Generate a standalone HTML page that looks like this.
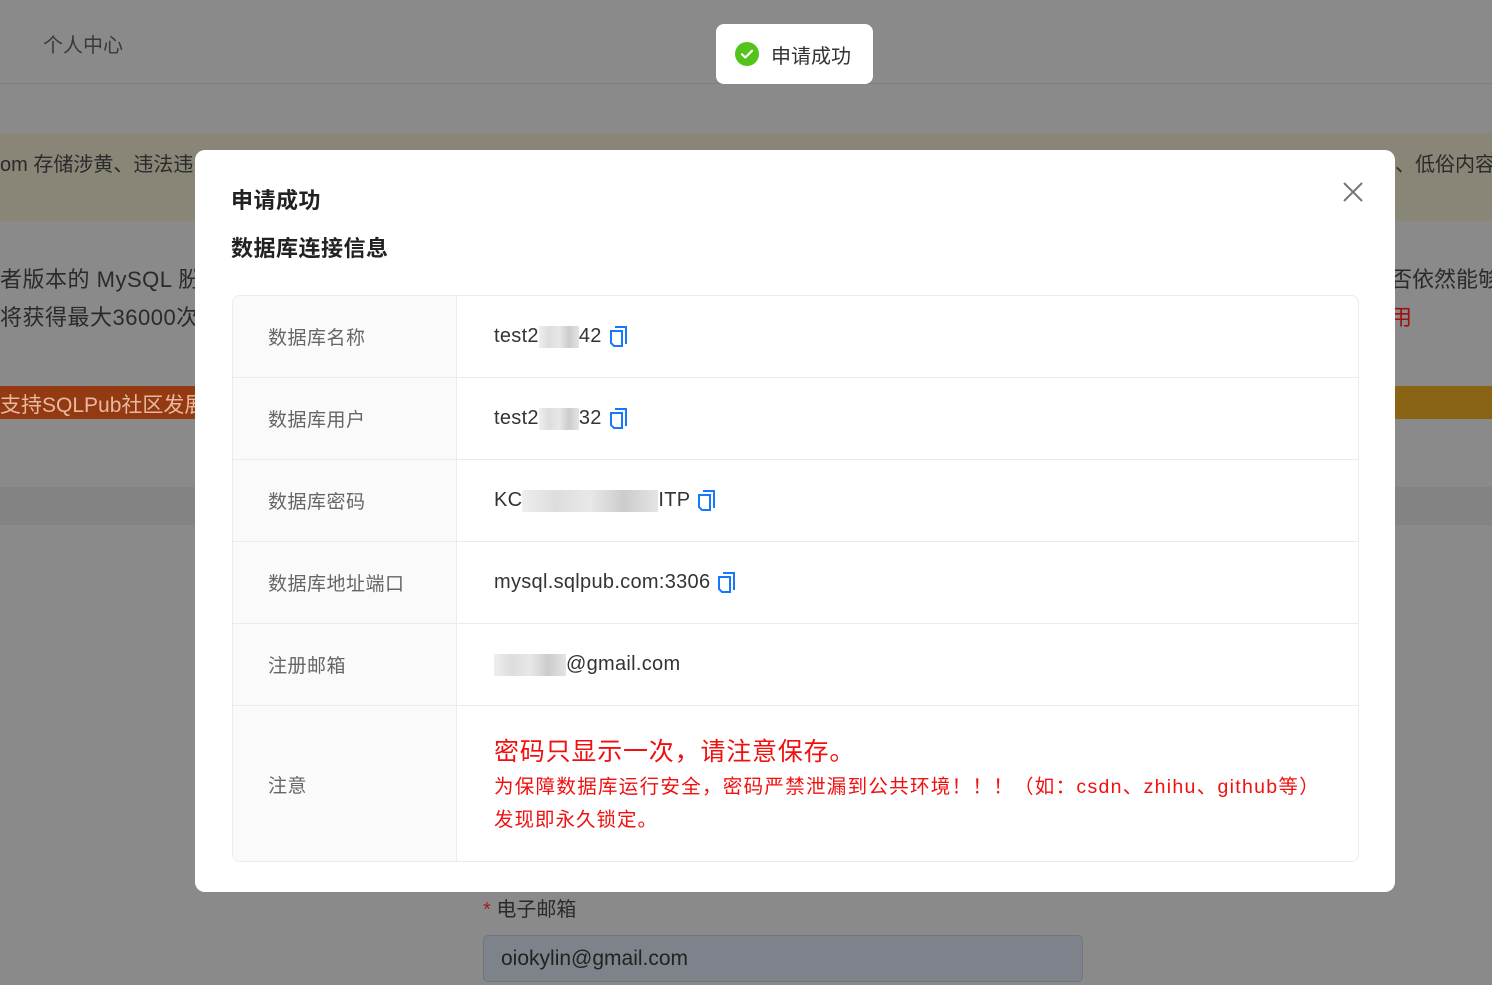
<!DOCTYPE html>
<html><head><meta charset="utf-8"><style>
*{margin:0;padding:0;box-sizing:border-box}
body{width:1492px;height:985px;overflow:hidden;position:relative;background:#8a8a8a;font-family:"Liberation Sans","Noto Sans CJK SC",sans-serif;}
.abs{position:absolute}
.bgt{color:#2a2a2a;font-size:22px;white-space:nowrap}
.modal{left:195px;top:150px;width:1200px;height:742px;background:#fff;border-radius:10px}
.tbl{left:37px;top:145px;width:1127px;height:567px;border:1px solid #ebebeb;border-radius:8px;overflow:hidden}
.row{position:absolute;left:0;width:100%;border-bottom:1px solid #ebebeb}
.lab{position:absolute;left:0;top:0;bottom:0;width:224px;background:#fafafa;border-right:1px solid #ebebeb;color:#666;font-size:19px;padding-left:35px;display:flex;align-items:center;letter-spacing:0.5px}
.val{position:absolute;left:261px;top:0;bottom:0;display:flex;align-items:center;color:#333;font-size:20px;letter-spacing:0.3px}
.blur{display:inline-block;height:22px;background:linear-gradient(90deg,#eee,#ddd,#e8e8e8,#ccc,#e4e4e4);vertical-align:middle}
.cp{display:inline-block;margin-left:8px;vertical-align:middle}
</style></head><body>
<div class="abs" style="left:0;top:83px;width:1492px;height:1px;background:#7e7e7e"></div>
<div class="abs bgt" style="left:43px;top:29px;font-size:20px;color:#3a3a3a">个人中心</div>
<div class="abs" style="left:0;top:133px;width:1492px;height:88px;background:#898677"></div>
<div class="abs bgt" style="left:0;top:148px;font-size:20px">om 存储涉黄、违法违</div>
<div class="abs bgt" style="left:1395px;top:148px;font-size:20px">、低俗内容</div>
<div class="abs bgt" style="left:0;top:262px;letter-spacing:0.5px">者版本的 MySQL 肦</div>
<div class="abs bgt" style="left:0;top:300px;letter-spacing:0.5px">将获得最大36000次</div>
<div class="abs bgt" style="left:1390px;top:262px">否依然能够</div>
<div class="abs bgt" style="left:1390px;top:300px;color:#a01010">用</div>
<div class="abs" style="left:0;top:386px;width:200px;height:33px;background:#933a12"></div>
<div class="abs bgt" style="left:0;top:389px;color:#e8b9a0;font-size:21px">支持SQLPub社区发展.</div>
<div class="abs" style="left:1395px;top:386px;width:97px;height:33px;background:#8a6415"></div>
<div class="abs" style="left:0;top:487px;width:1492px;height:38px;background:#838383"></div>
<div class="abs" style="left:483px;top:893px;font-size:20px;color:#2a2a2a"><span style="color:#a02020">*</span> 电子邮箱</div>
<div class="abs" style="left:483px;top:935px;width:600px;height:47px;background:#7e828a;border:1px solid #72767c;border-radius:5px;padding:11px 17px;font-size:21px;color:#222">oiokylin@gmail.com</div>

<div class="abs" style="left:716px;top:24px;width:157px;height:60px;background:#fff;border-radius:8px;display:flex;align-items:center;padding-left:19px;font-size:20px;color:#333">
<svg width="24" height="24" viewBox="0 0 24 24"><circle cx="12" cy="12" r="12" fill="#52c41a"/><path d="M7 12.3l3.3 3.2L17 8.8" stroke="#fff" stroke-width="2.2" fill="none" stroke-linecap="round" stroke-linejoin="round"/></svg>
<span style="margin-left:12px">申请成功</span></div>

<div class="abs modal">
<div class="abs" style="left:36px;top:33px;font-size:22px;font-weight:bold;color:#222;letter-spacing:0.5px">申请成功</div>
<div class="abs" style="left:36px;top:81px;font-size:22px;font-weight:bold;color:#222;letter-spacing:0.5px">数据库连接信息</div>
<svg class="abs" style="left:1148px;top:32px" width="20" height="20" viewBox="0 0 20 20"><path d="M1 1L19 19M19 1L1 19" stroke="#777" stroke-width="2"/></svg>
<div class="abs tbl">
<div class="row" style="top:0;height:82px"><div class="lab">数据库名称</div><div class="val">test2<span class="blur" style="width:40px"></span>42<svg class="cp" width="18" height="22" viewBox="0 0 18 22"><path d="M5 1h11v17" stroke="#1677ff" stroke-width="2" fill="none"/><path d="M1 5h11v15H4l-3-3z" stroke="#1677ff" stroke-width="2" fill="none"/></svg></div></div>
<div class="row" style="top:82px;height:82px"><div class="lab">数据库用户</div><div class="val">test2<span class="blur" style="width:40px"></span>32<svg class="cp" width="18" height="22" viewBox="0 0 18 22"><path d="M5 1h11v17" stroke="#1677ff" stroke-width="2" fill="none"/><path d="M1 5h11v15H4l-3-3z" stroke="#1677ff" stroke-width="2" fill="none"/></svg></div></div>
<div class="row" style="top:164px;height:82px"><div class="lab">数据库密码</div><div class="val">KC<span class="blur" style="width:136px"></span>ITP<svg class="cp" width="18" height="22" viewBox="0 0 18 22"><path d="M5 1h11v17" stroke="#1677ff" stroke-width="2" fill="none"/><path d="M1 5h11v15H4l-3-3z" stroke="#1677ff" stroke-width="2" fill="none"/></svg></div></div>
<div class="row" style="top:246px;height:82px"><div class="lab">数据库地址端口</div><div class="val">mysql.sqlpub.com:3306<svg class="cp" width="18" height="22" viewBox="0 0 18 22"><path d="M5 1h11v17" stroke="#1677ff" stroke-width="2" fill="none"/><path d="M1 5h11v15H4l-3-3z" stroke="#1677ff" stroke-width="2" fill="none"/></svg></div></div>
<div class="row" style="top:328px;height:82px"><div class="lab">注册邮箱</div><div class="val"><span class="blur" style="width:72px"></span>@gmail.com</div></div>
<div class="row" style="top:410px;height:157px;border-bottom:none"><div class="lab">注意</div>
<div class="abs" style="left:261px;top:28px;color:#f01010;white-space:nowrap">
<div style="font-size:25px;line-height:36px;letter-spacing:0.8px">密码只显示一次，请注意保存。</div>
<div style="font-size:19.5px;line-height:34px;letter-spacing:1.3px">为保障数据库运行安全，密码严禁泄漏到公共环境！！！（如：csdn、zhihu、github等）</div>
<div style="font-size:19.5px;line-height:32px;letter-spacing:1px">发现即永久锁定。</div>
</div></div>
</div>
</div>
</body></html>
